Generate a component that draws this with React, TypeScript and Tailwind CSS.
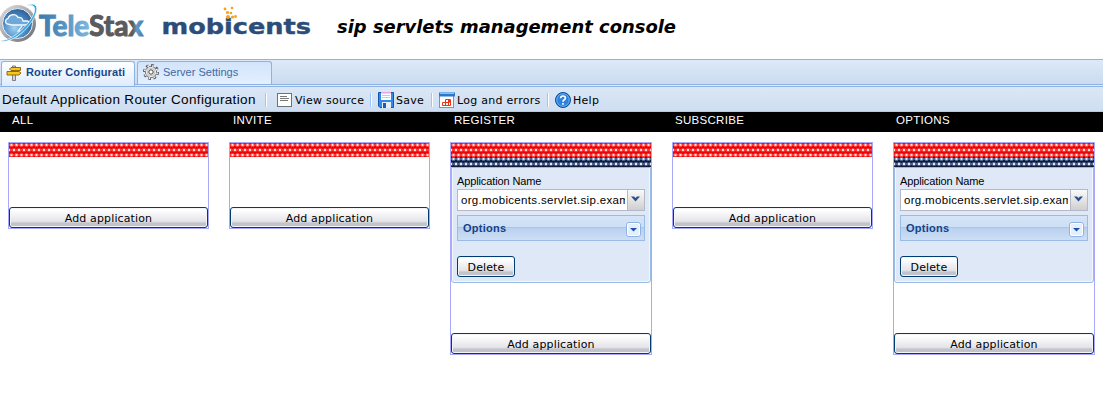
import type { ReactNode } from 'react';

const DEJAVU = "font-['DejaVu_Sans',sans-serif]";

function Brand() {
  return (
    <svg width="700" height="59" viewBox="0 0 700 59" className="block shrink-0">
      <defs>
        <radialGradient id="globe" cx="0.4" cy="0.65" r="0.7">
          <stop offset="0" stopColor="#a4d2f2" />
          <stop offset="0.55" stopColor="#4a8ac4" />
          <stop offset="1" stopColor="#2b5b96" />
        </radialGradient>
        <linearGradient id="rim" x1="0" y1="0" x2="1" y2="1">
          <stop offset="0" stopColor="#e2e2e4" />
          <stop offset="0.5" stopColor="#a9a9ad" />
          <stop offset="1" stopColor="#65666c" />
        </linearGradient>
        <linearGradient id="word" gradientUnits="userSpaceOnUse" x1="39" y1="0" x2="143" y2="0">
          <stop offset="0" stopColor="#3f79aa" />
          <stop offset="0.25" stopColor="#5595c6" />
          <stop offset="0.485" stopColor="#7fb8e0" />
          <stop offset="0.49" stopColor="#5a5b5f" />
          <stop offset="0.9" stopColor="#5a5b5f" />
          <stop offset="0.94" stopColor="#5f9ac8" />
          <stop offset="1" stopColor="#4a80ae" />
        </linearGradient>
      </defs>
      <circle cx="17.500" cy="23.500" r="18.500" fill="url(#rim)" />
      <circle cx="17.500" cy="23.500" r="15" fill="url(#globe)" stroke="#e7eef5" strokeWidth="1" />
      <path d="M7 24a3 3 0 0 1 1-5.500a5.500 5.500 0 0 1 10-1a4 4 0 0 1 5 3.500h4a2 2 0 0 1 0 4H12z" fill="#6fa8d8" stroke="#f4faff" strokeWidth="1.300" />
      <path d="M22 26l-4 5h4l-6 6" fill="none" stroke="#e4f3ff" strokeWidth="1.300" />
      <path d="M25 6Q34 2 36.500 6.500C39 15 26 33 12 39Q4 43 0 40.500Q8 41 18 33C29 24 37 12 34 7Q32 4 25 6z" fill="#35a8e2" stroke="#fff" strokeWidth="0.700" />
      <text x="39" y="35.700" fontSize="28" fontWeight="700" fontFamily="Lato, sans-serif" textLength="104" lengthAdjust="spacingAndGlyphs" fill="url(#word)" stroke="url(#word)" strokeWidth="1.100">TeleStax</text>
      <text x="161.500" y="34" fontSize="22" fontWeight="700" fontFamily="DejaVu Sans, sans-serif" textLength="149.500" lengthAdjust="spacingAndGlyphs" fill="#2b4d78" stroke="#2b4d78" strokeWidth="0.400">mobicents</text>
      <g fill="#f5a21b">
        <circle cx="228" cy="17" r="2" />
        <circle cx="227.500" cy="12.500" r="1.600" />
        <circle cx="225" cy="9" r="1.400" />
        <circle cx="231" cy="13" r="1.300" />
        <circle cx="232" cy="8" r="1.300" />
        <circle cx="232.500" cy="17" r="1.600" />
        <circle cx="235.500" cy="16.500" r="1.400" />
      </g>
      <text x="337" y="32.700" fontSize="18.500" fontWeight="700" fontStyle="italic" fontFamily="DejaVu Sans, sans-serif" textLength="339" lengthAdjust="spacingAndGlyphs" fill="#000">sip servlets management console</text>
    </svg>
  );
}

function SignpostIcon() {
  return (
    <svg width="16" height="16" viewBox="0 0 16 16" className="mb-[3px] shrink-0">
      <path d="M6.500 1h3v14.500h-3z" fill="#d5d5d5" stroke="#666" strokeWidth="0.800" />
      <path d="M5 2.500h9.500v3H5L3.500 4z" fill="#f6c522" stroke="#8a5d00" strokeWidth="0.900" />
      <path d="M1 6.500H13L15 8L13 10H1z" fill="#f6c522" stroke="#8a5d00" strokeWidth="0.900" />
    </svg>
  );
}

function GearIcon() {
  return (
    <svg width="16" height="16" viewBox="0 0 16 16" className="mb-[3px] shrink-0">
      <circle cx="8" cy="8" r="6.700" fill="none" stroke="#4d4d4d" strokeWidth="2.600" strokeDasharray="2.700 2.562" />
      <circle cx="8" cy="8" r="5.600" fill="#f0f0f0" stroke="#555" strokeWidth="0.800" />
      <circle cx="8" cy="8" r="6.300" fill="none" stroke="#eee" strokeWidth="1.800" strokeDasharray="1.500 3.448" strokeDashoffset="-0.500" />
      <circle cx="8" cy="8" r="3.800" fill="none" stroke="#aaa" strokeWidth="0.700" />
      <circle cx="8" cy="8" r="2.200" fill="#fff" stroke="#444" strokeWidth="1" />
    </svg>
  );
}

function SourceIcon() {
  return (
    <svg width="16" height="16" viewBox="0 0 16 16" className="shrink-0">
      <rect x=".5" y="1.500" width="14" height="13" fill="#fdfdfd" stroke="#6d7278" />
      <path d="M3 4.500h7M3 6.500h9M3 8.500h8" stroke="#777" />
    </svg>
  );
}

function SaveIcon() {
  return (
    <svg width="16" height="16" viewBox="0 0 16 16" className="shrink-0">
      <path d="M.5 .5h15v15H2L.5 14z" fill="#2e8be8" stroke="#1555a8" />
      <path d="M3 0h10v8H3z" fill="#fff" />
      <path d="M3 0h10v1.500H3z" fill="#e7a3f2" />
      <path d="M4 3.500h8M4 5.500h8" stroke="#c5c9e8" />
      <path d="M4 10h9v6H4z" fill="#e8eef5" />
      <path d="M5 11h3v5H5z" fill="#1b5eae" />
    </svg>
  );
}

function LogIcon() {
  return (
    <svg width="16" height="16" viewBox="0 0 16 16" className="shrink-0">
      <rect x=".5" y="2.500" width="14" height="13" fill="#fff" stroke="#8b8f96" />
      <path d="M0 .500h16v4H0z" fill="#2579cf" />
      <path d="M1 1.500h14" stroke="#8cc4f8" />
      <path d="M3.500 10.500h3v3h-3zM6.500 10.500h3v3h-3zM6.500 7.500h4v3h-4zM9.500 7.500h2v6h-2z" fill="none" stroke="#e63517" />
    </svg>
  );
}

function HelpIcon() {
  return (
    <svg width="16" height="16" viewBox="0 0 16 16" className="shrink-0">
      <circle cx="8" cy="8" r="7.500" fill="#1e6fca" stroke="#0d4c99" />
      <circle cx="8" cy="8" r="6.300" fill="#2b83dd" stroke="#8cc2f5" strokeWidth="0.800" />
      <path d="M5.600 6.300Q5.700 4 8 4T10.400 6Q10.400 7.200 9 8Q8 8.600 8 9.700M8 11v1.700" fill="none" stroke="#fff" strokeWidth="1.700" />
    </svg>
  );
}

function Separator() {
  return <div className="h-[14px] w-[2px] shrink-0 border-l border-[#98c8ff] bg-white" />;
}

function ToolItem({ icon, label, className }: { icon: ReactNode; label: string; className: string }) {
  return (
    <div className={`flex shrink-0 items-center gap-[2px] whitespace-nowrap ${className}`}>
      {icon}
      <span className="pt-px">{label}</span>
    </div>
  );
}

function Mesh({ id, height, base, mid, dot }: { id: string; height: number; base: string; mid: string; dot: string }) {
  return (
    <svg width="100%" height={height} className="block shrink-0">
      <defs>
        <pattern id={id} width="5" height="10" patternUnits="userSpaceOnUse">
          <rect width="5" height="10" fill={base} />
          <path d="M1 0h3v4H1zM0 1h5v2H0zM0 5h1.500v4H0zM3.500 5H5v4H3.500zM0 6h5v2H0z" fill={mid} />
          <rect x="1.500" y="1" width="2" height="2" fill={dot} />
          <rect x="-1" y="6" width="2" height="2" fill={dot} />
          <rect x="4" y="6" width="2" height="2" fill={dot} />
        </pattern>
      </defs>
      <rect width="100%" height={height} fill={`url(#${id})`} />
    </svg>
  );
}

function PushButton({ label, className }: { label: string; className: string }) {
  return (
    <button
      className={`${DEJAVU} flex h-[21px] shrink-0 items-center justify-center rounded-[3px] border border-[#003c74] bg-linear-to-b from-white from-10% via-[#e4e4e9] via-70% to-[#c3c4cb] to-80% pt-[2px] text-[11px] leading-none tracking-[0.130px] text-black shadow-[inset_0_0_0_1px_#f4f4f6] ${className}`}
    >
      {label}
    </button>
  );
}

function ApplicationForm({ id }: { id: string }) {
  return (
    <>
      <Mesh id={`${id}-grip`} height={10} base="#141d35" mid="#4b6491" dot="#dbe8fa" />
      <div className="flex h-[116px] shrink-0 flex-col rounded-b-[3px] border border-[#99bbe8] bg-[#dfe8f6] px-[5px] pt-[6px] shadow-[inset_1px_0_0_#f2f7fd,inset_-1px_-1px_0_#f2f7fd]">
        <div className="h-[15px] text-[11px] leading-[14px] tracking-[-0.120px]">Application Name</div>
        <div className="flex h-[22px] shrink-0 border border-[#b5b8c8] bg-white">
          <div className="w-[169px] shrink-0 overflow-hidden pl-[3px] text-[11.500px] leading-[20px] tracking-[0.320px] whitespace-nowrap">
            <div className="w-[164px] overflow-hidden">org.mobicents.servlet.sip.examples</div>
          </div>
          <div className="flex flex-1 items-center justify-center border-l border-[#b5b8c8] bg-linear-to-b from-[#fafafa] to-[#cfcfcf]">
            <svg width="9" height="8" viewBox="0 0 9 8" className="mr-px mb-[2px]">
              <path d="M0 1.500h3L4.500 3L6 1.500h3L4.500 6.500z" fill="#2c4e8c" />
            </svg>
          </div>
        </div>
        <div className="mt-[4px] flex h-[26px] shrink-0 items-center justify-between border border-[#99bbe8] bg-[linear-gradient(#d5e4f7_0,#cddff4_11px,#a8c6ed_11px,#a8c6ed_12px,#b9d0ee_12px,#cddff5_24px)] pr-[3px] pl-[5px] text-[11px] font-bold text-[#15428b]">
          <span className="tracking-[0.250px]">Options</span>
          <svg width="15" height="15" viewBox="0 0 15 15" className="mt-[2px]">
            <rect x=".5" y=".5" width="14" height="14" rx="2.500" fill="#e3effd" stroke="#8db2e3" />
            <rect x="1.500" y="1.500" width="12" height="12" rx="1.500" fill="none" stroke="#fff" />
            <path d="M4 6h7L7.500 9.500z" fill="#1d4fae" />
          </svg>
        </div>
        <PushButton label="Delete" className="mt-[15px] w-[58px]" />
      </div>
    </>
  );
}

function RouteColumn({ name, filled, className }: { name: string; filled?: boolean; className: string }) {
  return (
    <section className={`flex flex-col border border-[#a9a9fc] ${className}`}>
      <Mesh id={name} height={14} base="#e80606" mid="#fb3838" dot="#ffdcd8" />
      {filled && <ApplicationForm id={name} />}
      <PushButton label="Add application" className="mt-auto w-full" />
    </section>
  );
}

export default function App() {
  return (
    <main className="h-[402px] w-[1103px] overflow-hidden bg-white font-['Liberation_Sans',sans-serif] text-black">
      <Brand />
      <nav className="flex h-[25px] items-start gap-[2px] border-t border-[#8db2e3] bg-linear-to-b from-[#dce9f9] to-[#cbdbef] pt-px pl-px text-[11px] leading-none">
        <div className="flex h-[25px] w-[134px] items-center gap-[4px] rounded-t-[3px] border border-b-0 border-[#8db2e3] bg-linear-to-b from-white to-[#deecfd] pl-[4px] font-bold text-[#15498b]">
          <SignpostIcon />
          <span className="mb-[3px] tracking-[0.110px] whitespace-nowrap">Router Configurati</span>
        </div>
        <div className="flex h-[23px] w-[135px] items-center gap-[4px] rounded-t-[3px] border border-b-0 border-[#8db2e3] bg-linear-to-b from-[#d3e4fa] to-[#e2efff] pt-px pl-[5px] text-[#416aa3]">
          <GearIcon />
          <span className="mb-[2px]">Server Settings</span>
        </div>
      </nav>
      <div className="flex h-[3px] border-y border-[#8db2e3] bg-[#deecfd]">
        <div className="-mt-px ml-[2px] h-px w-[132px] bg-[#deecfd]" />
      </div>
      <div className={`${DEJAVU} flex h-[25px] items-center border-b border-[#b3cae8] bg-linear-to-b from-[#dae7f6] to-[#cedef1] pt-px pl-[2px] text-[11px] leading-none tracking-[0.280px]`}>
        <div className="w-[263px] shrink-0 font-['Liberation_Sans',sans-serif] text-[13.500px] tracking-[0.340px] whitespace-nowrap">Default Application Router Configuration</div>
        <Separator />
        <ToolItem icon={<SourceIcon />} label="View source" className="ml-[10px] w-[93px]" />
        <Separator />
        <ToolItem icon={<SaveIcon />} label="Save" className="ml-[6px] w-[53px]" />
        <Separator />
        <ToolItem icon={<LogIcon />} label="Log and errors" className="ml-[6px] w-[108px]" />
        <Separator />
        <ToolItem icon={<HelpIcon />} label="Help" className="ml-[6px]" />
      </div>
      <header className="grid h-[20px] grid-cols-[221px_221px_221px_221px_1fr] bg-black pl-[12px] text-[11.500px] leading-[17px] tracking-[0.300px] text-white">
        <span>ALL</span>
        <span>INVITE</span>
        <span>REGISTER</span>
        <span>SUBSCRIBE</span>
        <span>OPTIONS</span>
      </header>
      <div className="flex items-start pt-[10px] pl-[8px]">
        <RouteColumn name="all" className="mr-[20px] h-[87px] w-[201px]" />
        <RouteColumn name="invite" className="mr-[20px] h-[87px] w-[201px]" />
        <RouteColumn name="register" filled className="mr-[20px] h-[213px] w-[202px]" />
        <RouteColumn name="subscribe" className="mr-[20px] h-[87px] w-[201px]" />
        <RouteColumn name="options" filled className="h-[213px] w-[202px]" />
      </div>
    </main>
  );
}
